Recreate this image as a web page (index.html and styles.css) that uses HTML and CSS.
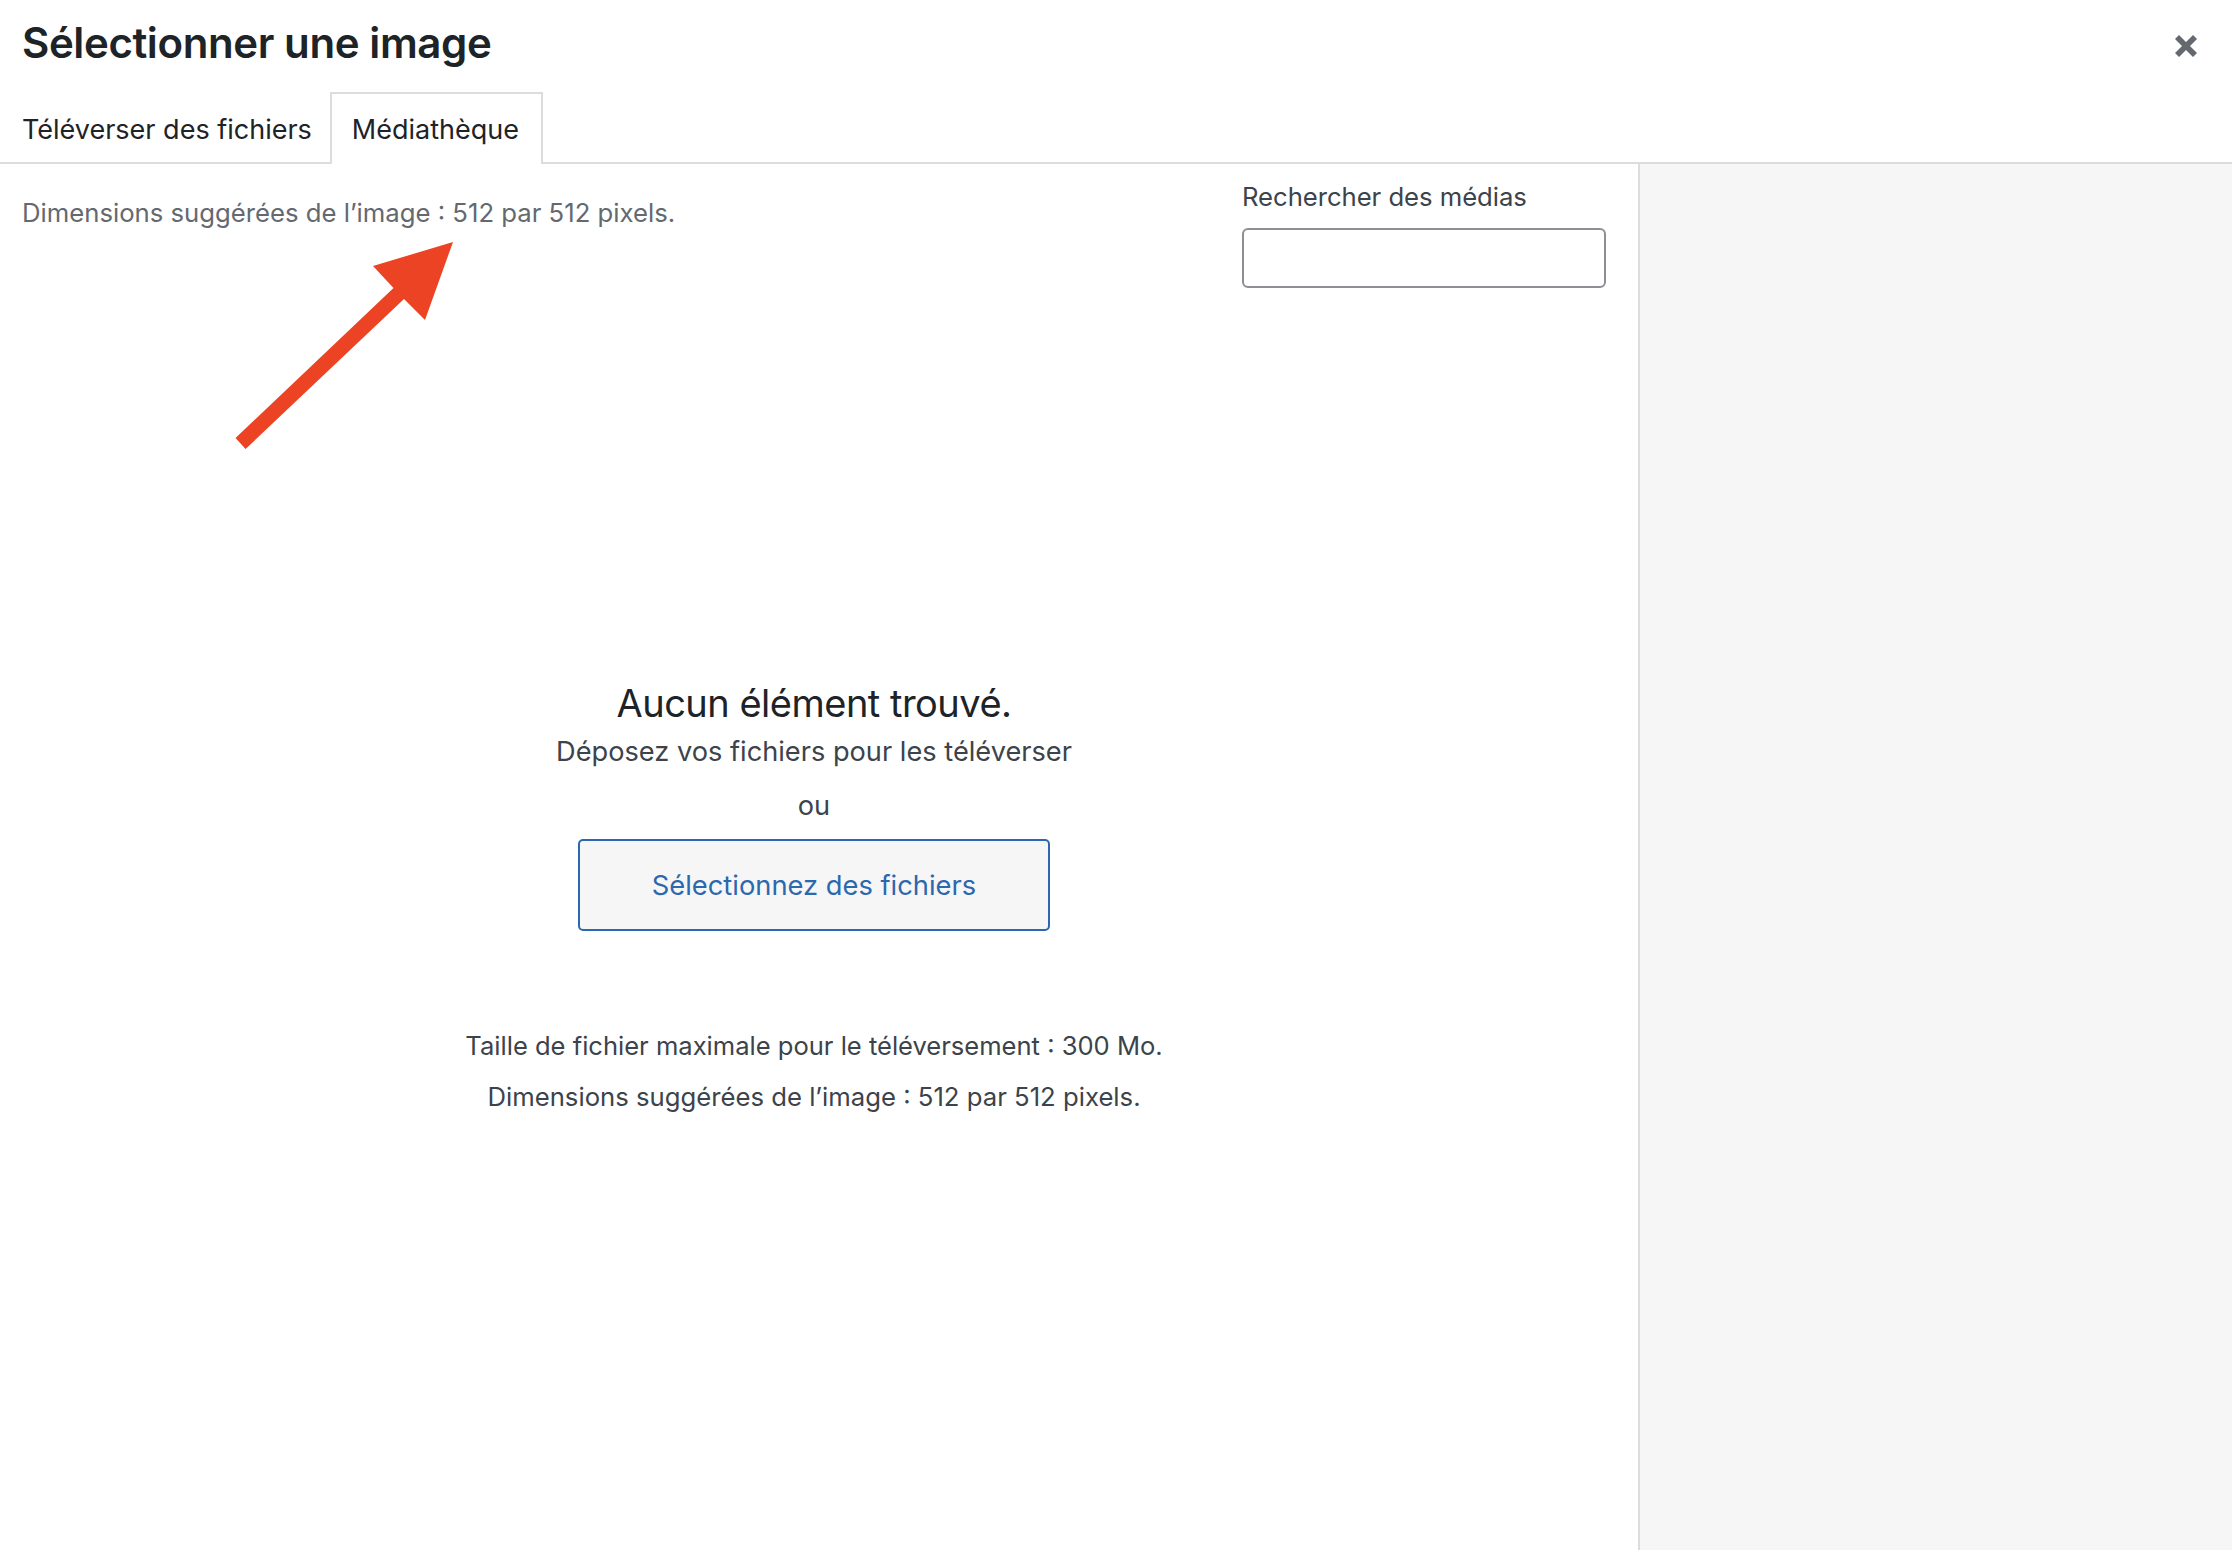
FILE: index.html
```html
<!DOCTYPE html>
<html lang="fr">
  <head>
    <meta charset="utf-8">
    <title>Sélectionner une image</title>
    <link rel="stylesheet" href="styles.css">
  </head>
<body>
	<div class="frame">
		<!-- titre -->
		<div class="titleBar">
			<h1 class="title">Sélectionner une image</h1>
			<button class="closeBtn" aria-label="Fermer">
				<svg width="24" height="24" viewBox="0 0 24 24"><path d="M5 1 L12 8 L19 1 L23 5 L16 12 L23 19 L19 23 L12 16 L5 23 L1 19 L8 12 L1 5 Z"/></svg>
			</button>
		</div>
		<!-- onglets -->
		<div class="tabs">
			<a class="tab">Téléverser des fichiers</a>
			<a class="tab active">Médiathèque</a>
		</div>
		<div class="content">
			<div class="library">
				<div class="toolbar">
					<p class="hint">Dimensions suggérées de l’image : 512 par 512 pixels.</p>
					<div class="search">
						<label for="search" class="searchLabel">Rechercher des médias</label>
						<input type="search" id="search" class="searchInput">
					</div>
				</div>
				<div class="empty">
					<h2 class="emptyTitle">Aucun élément trouvé.</h2>
					<p class="dropText">Déposez vos fichiers pour les téléverser</p>
					<p class="orText">ou</p>
					<button class="selectBtn">Sélectionnez des fichiers</button>
					<p class="maxSize">Taille de fichier maximale pour le téléversement : 300 Mo.</p>
					<p class="sizeHint">Dimensions suggérées de l’image : 512 par 512 pixels.</p>
				</div>
			</div>
			<div class="sidebar"></div>
		</div>
		<!-- flèche -->
		<svg class="arrow" width="240" height="220" viewBox="0 0 240 220"><path d="M233 2 L153 26 L173.500 48 L15.500 198 L25.600 209 L184 59 L205 80 Z"/></svg>
	</div>
</body>
</html>
```
FILE: styles.css
```css
* {
	box-sizing: border-box;
}
html, body {
	margin: 0;
	padding: 0;
	background: #fff;
}
.frame {
	position: relative;
	height: 1550px;
	display: flex;
	flex-direction: column;
	overflow: hidden;
	font-family: Inter, "Liberation Sans", sans-serif;
	font-size: 25.700px;
	color: #3c434a;
}
.titleBar {
	height: 92px;
	display: flex;
	justify-content: space-between;
	padding: 18px 34px 0 22px;
}
.title {
	margin: 0;
	font-size: 42px;
	line-height: 50px;
	font-weight: 600;
	color: #1d2327;
	letter-spacing: -0.400px;
}
.closeBtn {
	width: 24px;
	height: 24px;
	margin-top: 16px;
	padding: 0;
	border: none;
	background: none;
	cursor: pointer;
}
.closeBtn svg {
	display: block;
	fill: #646970;
}
.tabs {
	height: 72px;
	display: flex;
	border-bottom: 2px solid #dcdcde;
}
.tab {
	height: 72px;
	padding: 0 20px 0 22px;
	line-height: 75px;
	font-size: 27px;
	color: #1d2327;
}
.tab.active {
	width: 213px;
	padding: 0 0 0 20px;
	margin-left: -2px;
	line-height: 71px;
	background: #fff;
	border: 2px solid #dcdcde;
	border-bottom: none;
}
.content {
	flex: 1;
	display: flex;
}
.library {
	width: 1638px;
	display: flex;
	flex-direction: column;
}
.toolbar {
	display: flex;
	justify-content: space-between;
	padding: 0 32px 0 22px;
}
.hint {
	margin: 34px 0 0;
	line-height: 30px;
	color: #646970;
}
.search {
	width: 364px;
	padding-top: 17px;
}
.searchLabel {
	display: block;
	line-height: 32px;
	margin-bottom: 15px;
	letter-spacing: -0.050px;
}
.searchInput {
	display: block;
	width: 100%;
	height: 60px;
	border: 2px solid #8c8f94;
	border-radius: 6px;
	background: #fff;
}
.empty {
	display: flex;
	flex-direction: column;
	align-items: center;
	padding: 392px 10px 0 0;
}
.emptyTitle {
	margin: 0;
	font-size: 38px;
	line-height: 46px;
	font-weight: 400;
	letter-spacing: -0.500px;
	color: #1d2327;
}
.dropText, .orText, .maxSize, .sizeHint {
	margin: 0;
	line-height: 36px;
}
.dropText {
	font-size: 27.200px;
	margin-top: 8px;
}
.orText {
	font-size: 27.200px;
	margin-top: 18px;
}
.selectBtn {
	width: 472px;
	height: 92px;
	margin-top: 15px;
	padding-top: 1px;
	border: 2px solid #2c68ae;
	border-radius: 5px;
	background: #f6f6f7;
	color: #2c68ae;
	font-family: inherit;
	font-size: 27.300px;
	cursor: pointer;
}
.maxSize {
	margin-top: 97px;
	font-size: 25.550px;
}
.sizeHint {
	margin-top: 15px;
}
.sidebar {
	flex: 1;
	background: #f6f6f6;
	border-left: 2px solid #dcdcde;
}
.arrow {
	position: absolute;
	left: 220px;
	top: 240px;
}
.arrow path {
	fill: #ec4324;
}
```
